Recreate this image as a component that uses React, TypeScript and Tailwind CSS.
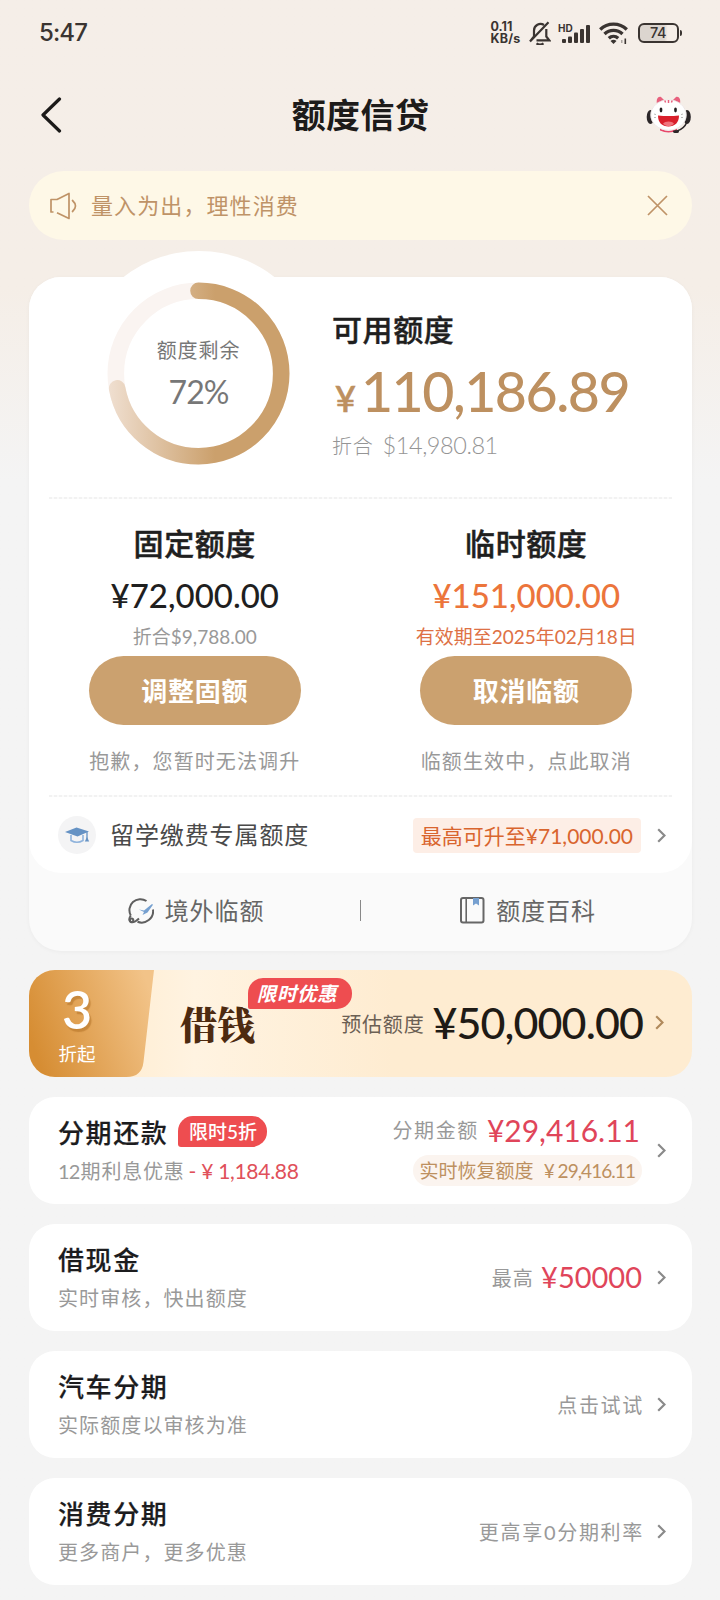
import type { ReactNode } from 'react'
import clsx from 'clsx'

function Chevron({ className = 'text-[#8a8a8a]' }: { className?: string }) {
  return (
    <svg width="9" height="15" viewBox="0 0 9 15" className={clsx('shrink-0', className)}>
      <path d="M1.2 1.2 7.5 7.5 1.2 13.8" fill="none" stroke="currentColor" strokeWidth="2.2" />
    </svg>
  )
}

function StatusBar() {
  return (
    <div className="flex h-[66px] items-center pl-[39px] pr-[38px] text-[#3a3431]">
      <span className="font-['Inter'] text-[24px] font-medium leading-none tracking-[-0.9px]">5:47</span>

      <div className="ml-auto flex items-center">
        <div className="mr-[7px] w-[31px] font-['Inter'] text-[12.5px] font-bold leading-[12px]">
          <div>0.11</div>
          <div className="tracking-[0.2px]">KB/s</div>
        </div>

        {/* Silenciado */}
        <svg width="22" height="24" viewBox="0 0 22 24" className="mr-[7px]" fill="none" stroke="currentColor" strokeWidth="2.2">
          <path d="M5 15V9.500a6.500 6.500 0 0 1 10-5.500M17.300 8v7.500l3 3.800H7.500" />
          <path d="M1 20.500 19.500 1.200M1 20.500 5 15.500" />
          <path d="M7.500 22.300c2 1.400 5 1.400 7 0" />
        </svg>

        {/* Sinal */}
        <svg width="33" height="22" viewBox="0 0 33 22" className="mr-[8px]" fill="currentColor">
          <text x="0" y="9.500" fontFamily="Inter" fontSize="10" fontWeight="700">HD</text>
          <rect x="4" y="17" width="4" height="4" rx="1" />
          <rect x="10" y="14.500" width="4" height="6.500" rx="1" />
          <rect x="16" y="10.500" width="4" height="10.500" rx="1" />
          <rect x="22" y="7" width="4" height="14" rx="1" />
          <rect x="28" y="3" width="4" height="18" rx="1" />
        </svg>

        <svg width="30" height="22" viewBox="0 0 30 22" className="mr-[9px]" fill="none" stroke="currentColor" strokeWidth="3.3">
          <path d="M1.200 7.500a19 19 0 0 1 26.600 0" />
          <path d="M5.500 12a13 13 0 0 1 18 0" />
          <path d="M9.800 16.200a7 7 0 0 1 9.400 0" />
          <path d="M11.500 19c2-1.700 4-1.700 6 0l-3 3z" fill="currentColor" stroke="none" />
          <path d="M22.800 21v-3" strokeWidth="1.200" opacity=".5" />
          <path d="M26.300 16.500V22" strokeWidth="1.600" />
        </svg>

        <div className="flex items-center">
          <div className="flex h-[20px] w-[41px] items-center justify-center rounded-[6px] border-2 border-[#3a3431] bg-linear-to-r from-[#dcd5cf] from-65% to-transparent to-75% font-['Inter'] text-[14.5px] font-medium leading-none tracking-[-0.5px]">
            74
          </div>
          <div className="ml-[1px] h-[6px] w-[2.500px] rounded-r bg-[#3a3431]" />
        </div>
      </div>
    </div>
  )
}

function Mascot() {
  return (
    <svg width="46" height="40" viewBox="0 0 46 40">
      <path d="M11 9c-1-5 1-8 4-7l4 4zM34 9c1-5-1-8-4-7l-4 4z" fill="#e8607d" />
      <ellipse cx="4.500" cy="22" rx="3.800" ry="7" fill="#2b2628" />
      <ellipse cx="41" cy="22" rx="3.800" ry="7" fill="#2b2628" />
      <path d="M14 33q8.500 6 17 0v2.500q-8.500 4-17 0z" fill="#e8476a" />
      <ellipse cx="22.500" cy="20" rx="18" ry="15.500" fill="#fff" />
      <ellipse cx="22.500" cy="20" rx="17.700" ry="15.200" fill="none" stroke="#e6dcdc" strokeWidth=".7" />
      <path d="M22.500 5v3M18.800 5.500l.8 2M26.200 5.500l-.8 2" stroke="#e8607d" strokeWidth="1.500" />
      <ellipse cx="15" cy="15" rx="1.400" ry="2.400" fill="#231f20" />
      <ellipse cx="29.500" cy="15" rx="1.400" ry="2.400" fill="#231f20" />
      <path d="M12 20.500q10.500 1 21 0c0 7-4 11-10.500 11S12 27.500 12 20.500z" fill="#d91f2b" />
      <path d="M17 28.700c2-3 9-3 11 0-3 3.300-8 3.300-11 0z" fill="#f0737c" />
      <path d="M8 19l2 .6M8 22.500h2M37 19l-2 .6M37 22.500h-2" stroke="#aaa" strokeWidth=".8" />
      <path d="M41 27q-3 7-10 9" fill="none" stroke="#2b2628" strokeWidth="1.600" />
      <ellipse cx="30" cy="36.500" rx="3" ry="1.600" fill="#2b2628" />
    </svg>
  )
}

function Header() {
  return (
    <div className="flex h-[98px] items-center pl-[40px] pr-[28px]">
      <svg width="46" height="36" viewBox="0 0 46 36">
        <path d="M19.500 2 3 18l16.500 16" fill="none" stroke="#1c1a19" strokeWidth="3.2" strokeLinecap="round" strokeLinejoin="round" />
      </svg>
      <h1 className="mx-auto pr-[11px] text-[34px] font-bold leading-none tracking-[0.4px] text-[#1d1b1a]">额度信贷</h1>
      <Mascot />
    </div>
  )
}

function Notice() {
  return (
    <div className="ml-[29px] mr-[28px] mt-[7px] flex h-[69px] items-center rounded-full bg-[#fef8e7] pl-[20px] pr-[24px] text-[#bf9367]">
      <svg width="29" height="28" viewBox="0 0 29 28" fill="none" stroke="currentColor" strokeWidth="1.700">
        <path d="M4.500 20H2V7.500h6L20 1.500v25L8 20.700" strokeLinejoin="round" />
        <path d="M23.500 8.500q6 5.500 0 11" strokeLinecap="round" />
      </svg>
      <span className="ml-[13px] text-[22px] leading-none tracking-[1.1px]">量入为出，理性消费</span>
      <svg width="21" height="21" viewBox="0 0 21 21" className="ml-auto">
        <path d="m1 1 19 19M20 1 1 20" stroke="currentColor" strokeWidth="1.700" />
      </svg>
    </div>
  )
}

function QuotaRing({ percent }: { percent: number }) {
  const length = 2 * Math.PI * 82.7
  return (
    <div className="relative h-[183px] w-[183px] shrink-0">
      <div className="absolute -left-[31.500px] -top-[31.500px] h-[246px] w-[246px] rounded-full bg-white" />
      <svg viewBox="0 0 183 183" className="absolute inset-0">
        <defs>
          <linearGradient id="ring" gradientUnits="userSpaceOnUse" x1="0" x2="0" y1="0" y2="108">
            <stop offset="0" stopColor="#f0e0d2" />
            <stop offset="1" stopColor="#cba06c" />
          </linearGradient>
        </defs>
        <circle cx="91.500" cy="91.500" r="82.700" fill="none" stroke="#faf4f1" strokeWidth="16.600" />
        <g transform="rotate(-90 91.500 91.500)">
          <circle
            cx="91.500"
            cy="91.500"
            r="82.700"
            fill="none"
            stroke="url(#ring)"
            strokeWidth="16.600"
            strokeLinecap="round"
            strokeDasharray={`${(length * percent) / 100} ${length}`}
          />
        </g>
      </svg>
      <div className="relative flex flex-col items-center pt-[56px] text-[#777]">
        <div className="text-[20px] leading-[24px] tracking-[0.9px]">额度剩余</div>
        <div className="mt-[13px] text-[32px] leading-[34px] tracking-[-1px]">{percent}%</div>
      </div>
    </div>
  )
}

function Dashed() {
  return <div className="mx-[20px] h-[2px] bg-[repeating-linear-gradient(90deg,#f2f2f2_0_3px,#fbfbfb_3px_5px)]" />
}

function QuotaColumn({ title, amount, detail, action, note, accent }: {
  title: string
  amount: string
  detail: string
  action: string
  note: string
  accent?: boolean
}) {
  return (
    <div className="flex w-1/2 flex-col items-center whitespace-nowrap pt-[28px]">
      <div className="text-[30px] font-medium leading-[32px] tracking-[0.6px] text-[#1f1f1f] [-webkit-text-stroke:0.5px]">{title}</div>
      <div className={clsx('mt-[17px] text-[33px] font-medium leading-[38px]', accent ? 'text-[#ec753b]' : 'text-[#1f1f1f]')}>
        {amount}
      </div>
      <div className={clsx('mt-[11px] text-[19px] leading-[24px]', accent ? 'text-[#de7145]' : 'text-[#999]')}>{detail}</div>
      <button className="mt-[7px] h-[69px] w-[212px] shrink-0 rounded-full bg-[#cba16f] text-[26px] font-bold leading-none tracking-[0.7px] text-white">
        {action}
      </button>
      <div className="mt-[23px] text-[20px] leading-[26px] tracking-[1.1px] text-[#999]">{note}</div>
    </div>
  )
}

function QuotaCard() {
  return (
    <div className="ml-[29px] mr-[28px] mt-[37px] rounded-[32px] bg-[#fafafa] shadow-[0_1px_4px_rgba(0,0,0,0.04)]">
      <div className="h-[596px] rounded-[32px] bg-white">
        <div className="flex h-[220px] pl-[78px] pt-[5px]">
          <QuotaRing percent={72} />
          <div className="relative ml-[42px] whitespace-nowrap pt-[31px]">
            <div className="text-[30px] font-medium leading-[32px] tracking-[0.6px] text-[#1f1f1f] [-webkit-text-stroke:0.4px]">可用额度</div>
            <div className="mt-[14px] flex items-baseline pl-[3px] font-medium leading-[64px] text-[#bd9060]">
              <span className="text-[36px] [-webkit-text-stroke:0.6px]">¥</span>
              <span className="ml-[5px] text-[55.500px] tracking-[-1.5px]">110,186.89</span>
            </div>
            <div className="flex items-baseline leading-[30px] text-[#959595]">
              <span className="text-[20px] font-light tracking-[0.8px]">折合</span>
              <span className="ml-[9px] text-[23.500px] font-light tracking-[-0.45px]">$14,980.81</span>
            </div>
          </div>
        </div>
        <Dashed />
        <div className="flex h-[296px]">
          <QuotaColumn title="固定额度" amount="¥72,000.00" detail="折合$9,788.00" action="调整固额" note="抱歉，您暂时无法调升" />
          <QuotaColumn title="临时额度" amount="¥151,000.00" detail="有效期至2025年02月18日" action="取消临额" note="临额生效中，点此取消" accent />
        </div>
        <Dashed />
        <div className="flex h-[76px] items-center pl-[29px] pr-[26px]">
          <div className="flex h-[38px] w-[38px] items-center justify-center rounded-full bg-[#f4f4f5]">
            <svg width="25" height="17" viewBox="0 0 25 17">
              <path d="M0 5 11.500.5 24 4.500 12.500 9.500z" fill="#6592c4" />
              <path d="M6 8v5.500q6 3.500 12 0V8" fill="none" stroke="#8fb3dc" strokeWidth="1.600" />
              <path d="M22 5v8" stroke="#6592c4" strokeWidth="1.300" />
              <path d="m22 10 2.200 4.500h-4.400z" fill="#6592c4" />
            </svg>
          </div>
          <span className="ml-[14px] text-[24px] leading-none tracking-[0.9px] text-[#4a4a4a]">留学缴费专属额度</span>
          <span className="ml-auto flex h-[35px] items-center rounded-[4px] bg-[#fdeee6] px-[8px] text-[21px] leading-none text-[#d9652e]">
            最高可升至¥71,000.00
          </span>
          <Chevron className="ml-[16px] text-[#8a8a8a]" />
        </div>
      </div>

      <div className="flex h-[78px] items-center pb-[3px] text-[24px] tracking-[0.9px] text-[#666]">
        <div className="flex flex-1 items-center justify-center gap-[11px] pl-[3px]">
          <svg width="26" height="26" viewBox="0 0 26 26" fill="none" stroke="#5f5f5f" strokeWidth="2">
            <path d="M18.500 3A11 11 0 0 0 2.800 17.500M25 11.500A11.500 11.500 0 0 1 9.500 23.800" />
            <path d="M2.800 17.500C1 20 1 22.500 2.500 23.800c2 1.200 5.500-.5 8.500-3.300" />
            <circle cx="3.600" cy="22.300" r="1.700" />
            <path d="m11 11.500 5 1L24 6l1 .8-5.500 7.700-5 2.500 1.500-3z" fill="#76a0d0" stroke="none" />
          </svg>
          境外临额
        </div>
        <div className="h-[21px] w-px bg-[#888]" />
        <div className="flex flex-1 items-center justify-center gap-[11px] pl-[3px]">
          <svg width="25" height="27" viewBox="0 0 25 27" fill="none">
            <rect x="1" y="1" width="22.500" height="24.500" rx="2" stroke="#666" strokeWidth="2" />
            <path d="M6.200 1v24.500" stroke="#666" strokeWidth="1.600" />
            <path d="M13 1h6v7.500l-3-2-3 2z" fill="#76a0d0" />
          </svg>
          额度百科
        </div>
      </div>
    </div>
  )
}

function BorrowBanner() {
  return (
    <div className="relative flex h-[107px] items-center overflow-hidden rounded-[26px] bg-linear-to-r from-[#ffeccf] from-10% via-[#fff3e1] via-25% to-[#feecd1] to-55% pr-[28px]">
      {/* Aba laranja com a taxa de desconto */}
      <div className="relative h-full w-[126px] shrink-0 text-white">
        <svg width="126" height="107" viewBox="0 0 126 107" className="absolute inset-0">
          <defs>
            <linearGradient id="tab" x1="0" y1=".6" x2="1" y2=".3">
              <stop offset="0" stopColor="#d68d33" />
              <stop offset="1" stopColor="#f2c388" />
            </linearGradient>
          </defs>
          <path d="M0 0h125L114.500 92q-1.700 15-17 15H0z" fill="url(#tab)" />
        </svg>
        <div className="relative flex w-[96px] flex-col items-center pt-[10px]">
          <div className="text-[52px] font-semibold leading-[58px] [text-shadow:2px_3px_1px_rgba(160,95,20,0.4)]">3</div>
          <div className="mt-[2px] text-[18.500px] leading-[28px]">折起</div>
        </div>
      </div>

      <span className="ml-[25px] font-['Noto_Serif_CJK_SC','Noto_Serif_SC','Liberation_Serif','Noto_Sans_CJK_SC',serif] text-[37.500px] font-black leading-none text-[#4d2a10]">
        借钱
      </span>
      <span className="absolute left-[219px] top-[8px] flex h-[31px] w-[104px] items-center justify-center rounded-[15px] rounded-bl-[2px] bg-[#ee4d50] text-[19.500px] font-bold italic leading-none tracking-[0.6px] text-white">
        <span className="-ml-[6px]">限时优惠</span>
      </span>

      <div className="ml-auto flex items-center whitespace-nowrap pb-[3px]">
        <span className="pt-[4px] text-[20px] leading-none tracking-[0.8px] text-[#6b6054]">预估额度</span>
        <span className="ml-[8px] text-[43px] font-medium leading-none tracking-[-0.9px] text-[#1f1b16]">¥50,000.00</span>
        <Chevron className="ml-[12px] text-[#b18a5c]" />
      </div>
    </div>
  )
}

function ServiceCard({ title, tag, desc, children }: { title: string; tag?: string; desc: ReactNode; children: ReactNode }) {
  return (
    <div className="flex h-[107px] items-center whitespace-nowrap rounded-[26px] bg-white pl-[29px] pr-[26px]">
      <div className="pb-[1px]">
        <div className="flex h-[32px] items-center">
          <span className="text-[26px] font-medium leading-none tracking-[1.6px] text-[#1c1c1e] [-webkit-text-stroke:0.2px]">{title}</span>
          {tag && (
            <span className="-mt-[3px] ml-[10px] flex h-[31px] w-[89px] items-center justify-center rounded-[15px] rounded-bl-[3px] bg-[#ee4d50] text-[19px] font-medium leading-none text-white">
              {tag}
            </span>
          )}
        </div>
        <div className="mt-[9px] text-[20px] leading-[26px] tracking-[1.1px] text-[#999]">{desc}</div>
      </div>
      <div className="ml-auto">{children}</div>
      <Chevron className="ml-[15px] text-[#8a8a8a]" />
    </div>
  )
}

export default function App() {
  return (
    <div className="h-[1600px] w-[720px] overflow-hidden bg-[#f4f4f4] bg-linear-to-b from-[#f5eee8] from-0% via-[#f5eee7] via-18% to-[#f4f4f4] to-30% font-['Lato','Noto_Sans_CJK_SC',sans-serif]">
      <StatusBar />
      <Header />
      <Notice />
      <QuotaCard />

      <div className="ml-[29px] mr-[28px] mt-[19px] flex flex-col gap-[20px]">
        <BorrowBanner />

        <ServiceCard
          title="分期还款"
          tag="限时5折"
          desc={
            <>
              <span className="tracking-[-0.8px]">12</span>
              <span className="ml-[1px] tracking-[0.8px]">期利息优惠</span>
              <span className="ml-[4px] text-[21px] tracking-[-0.3px] text-[#e0505a]">- ¥ 1,184.88</span>
            </>
          }
        >
          <div className="flex flex-col items-end pb-[3px]">
            <div className="flex h-[34px] items-center">
              <span className="text-[20px] leading-none tracking-[1.6px] text-[#999]">分期金额</span>
              <span className="ml-[8px] mr-[2px] text-[30px] leading-none text-[#e0455a]">¥29,416.11</span>
            </div>
            <div className="mt-[8px] flex h-[31px] items-center rounded-full bg-[#fbf4ef] px-[7px] text-[19px] leading-none text-[#bd9060]">
              实时恢复额度<span className="ml-[10px] tracking-[-0.95px]">¥ 29,416.11</span>
            </div>
          </div>
        </ServiceCard>

        <ServiceCard title="借现金" desc="实时审核，快出额度">
          <div className="flex items-center pb-[3px]">
            <span className="pt-[3px] text-[20px] leading-none tracking-[1.2px] text-[#999]">最高</span>
            <span className="ml-[7px] text-[29px] leading-none text-[#e0455a]">¥50000</span>
          </div>
        </ServiceCard>

        <ServiceCard title="汽车分期" desc="实际额度以审核为准">
          <span className="-mr-[2px] text-[20px] tracking-[1.7px] text-[#999]">点击试试</span>
        </ServiceCard>

        <ServiceCard title="消费分期" desc="更多商户，更多优惠">
          <span className="-mr-[2px] text-[20px] tracking-[1.7px] text-[#999]">更高享0分期利率</span>
        </ServiceCard>
      </div>
    </div>
  )
}
